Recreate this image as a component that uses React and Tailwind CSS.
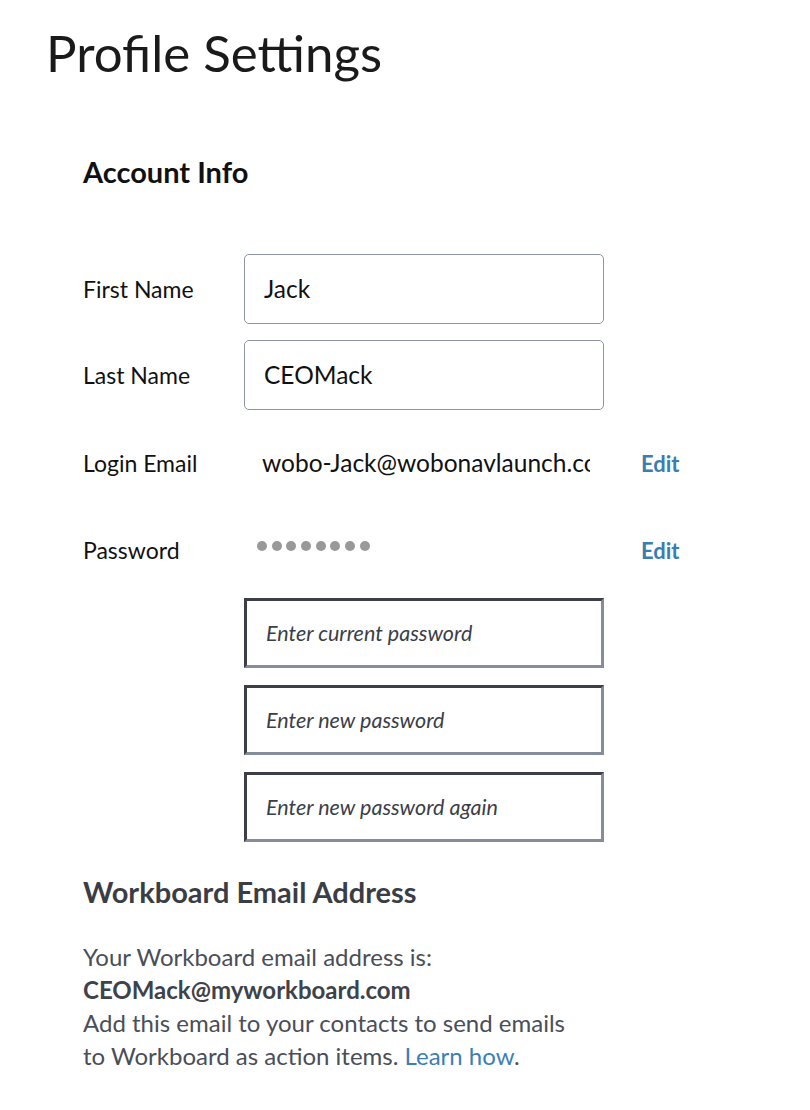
import React from "react";

const font = { fontFamily: "Lato, 'Noto Sans', sans-serif" };

function NameRow({ label, value }) {
  return (
    <div className="flex h-[70px] items-center">
      <div className="w-[161px] text-[23px] text-[#111]">{label}</div>
      <input
        defaultValue={value}
        className="h-[70px] w-[360px] rounded-[5px] border border-[#8d95a4] bg-white pl-[19px] text-[24.5px] text-[#111] outline-none"
      />
    </div>
  );
}

function PasswordBox({ placeholder }) {
  return (
    <input
      type="password"
      placeholder={placeholder}
      className="h-[70px] w-[360px] border-[3px] border-t-[#3c3f47] border-l-[#3c3f47] border-r-[#858d9b] border-b-[#858d9b] bg-white pl-[19px] text-[21.5px] outline-none placeholder:italic placeholder:text-[#3a3e48]"
    />
  );
}

export default function App() {
  return (
    <div className="min-h-[1110px] bg-white pb-10" style={font}>
      <h1 className="pl-[46px] pt-[22px] text-[51px] font-normal leading-[1.2] text-[#1a1a1a]">Profile Settings</h1>

      <div className="pl-[83px]">
        <h2 className="mt-[72px] text-[29px] font-bold leading-[1.2] text-[#111]">Account Info</h2>

        <div className="mt-[64px] flex flex-col gap-[16px]">
          <NameRow label="First Name" value="Jack" />
          <NameRow label="Last Name" value="CEOMack" />
        </div>

        <div className="mt-[10px] flex h-[87px] items-center">
          <div className="w-[161px] text-[23px] text-[#111]">Login Email</div>
          <div className="w-[346px] overflow-hidden whitespace-nowrap pl-[18px] text-[24.5px] text-[#111]">
            wobo-Jack@wobonavlaunch.com
          </div>
          <button type="button" className="ml-[51px] text-[22px] font-bold text-[#3a7db0]">Edit</button>
        </div>

        <div className="flex h-[87px] items-center">
          <div className="w-[161px] text-[23px] text-[#111]">Password</div>
          <div className="flex w-[346px] gap-[4.7px] pb-[8px] pl-[13px]">
            {[0, 1, 2, 3, 4, 5, 6, 7].map((i) => (
              <span key={i} className="h-[10px] w-[10px] rounded-full bg-[#999] blur-[0.6px]" />
            ))}
          </div>
          <button type="button" className="ml-[51px] text-[22px] font-bold text-[#3a7db0]">Edit</button>
        </div>

        <div className="ml-[161px] mt-[4px] flex flex-col gap-[17px]">
          <PasswordBox placeholder="Enter current password" />
          <PasswordBox placeholder="Enter new password" />
          <PasswordBox placeholder="Enter new password again" />
        </div>

        <h2 className="mt-[33px] text-[29px] font-bold leading-[1.2] text-[#3a3d45]">Workboard Email Address</h2>

        <p className="mt-[30px] text-[24px] leading-[33px] text-[#4a4e58]">
          Your Workboard email address is:
          <br />
          <span className="font-bold text-[#3e424b]">CEOMack@myworkboard.com</span>
          <br />
          Add this email to your contacts to send emails
          <br />
          to Workboard as action items.{" "}
          <a href="#" className="text-[#3a80b5]">Learn how</a>.
        </p>
      </div>
    </div>
  );
}
